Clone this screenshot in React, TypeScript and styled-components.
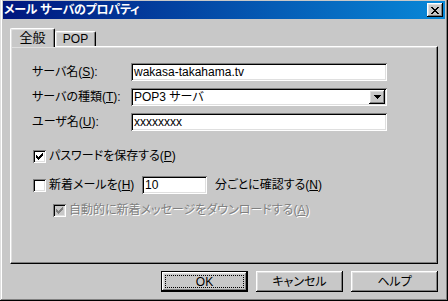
import React from 'react';
import styled, { createGlobalStyle } from 'styled-components';

const FONT = `"Liberation Sans", "Noto Sans CJK JP", sans-serif`;
const FACE = '#c8c8c8';

const GlobalStyle = createGlobalStyle`
  html, body {
    margin: 0;
    padding: 0;
    background: ${FACE};
  }
  body {
    font-family: ${FONT};
    font-size: 12px;
    font-feature-settings: "palt";
    color: #000;
  }
  u {
    text-underline-offset: 1px;
  }
`;

const Window = styled.div`
  width: 448px;
  height: 301px;
  box-sizing: border-box;
  background: ${FACE};
  padding: 1px 3px 3px 3px;
  box-shadow: inset -1px -1px #000, inset 1px 0 #dfdfdf, inset -2px -2px #808080, inset 2px 0 #fff;
  display: flex;
  flex-direction: column;
`;

const TitleBar = styled.div`
  height: 18px;
  display: flex;
  align-items: center;
  justify-content: space-between;
  background: linear-gradient(to right, #00167e, #0888d8);
  padding: 0 2px 0 1px;
`;

const TitleText = styled.span`
  color: #fff;
  font-weight: bold;
  font-size: 12px;
  line-height: 18px;
  letter-spacing: -0.3px;
`;

// raised bevel used by buttons and the close box
const raised = `
  background: ${FACE};
  box-shadow: inset -1px -1px #000, inset 1px 1px #fff, inset -2px -2px #808080, inset 2px 2px #dfdfdf;
`;

const sunken = `
  box-shadow: inset 1px 1px #808080, inset -1px -1px #fff, inset 2px 2px #000, inset -2px -2px #dfdfdf;
`;

const CloseBox = styled.div`
  ${raised}
  width: 16px;
  height: 14px;
  display: flex;
  align-items: center;
  justify-content: center;
`;

const Body = styled.div`
  flex: 1;
  display: flex;
  flex-direction: column;
  padding: 9px 7px 0 7px;
`;

const TabStrip = styled.div`
  height: 18px;
  display: flex;
  align-items: flex-end;
  position: relative;
  z-index: 1;
`;

const Tab = styled.div<{ $active?: boolean }>`
  box-sizing: border-box;
  width: ${({ $active }) => ($active ? '45px' : '41px')};
  height: ${({ $active }) => ($active ? '19px' : '15px')};
  margin-bottom: ${({ $active }) => ($active ? '-1px' : '0')};
  background: ${FACE};
  border-top: 1px solid #fff;
  border-left: 1px solid #fff;
  border-right: 1px solid #000;
  border-top-left-radius: 2px;
  border-top-right-radius: 2px;
  box-shadow: inset -1px 0 #808080, inset 1px 1px #dfdfdf;
  display: flex;
  justify-content: center;
  align-items: ${({ $active }) => ($active ? 'flex-start' : 'center')};
  padding-top: ${({ $active }) => ($active ? '2px' : '0')};
  font-size: ${({ $active }) => ($active ? '13px' : '12px')};
  line-height: 14px;
`;

const Panel = styled.div`
  box-sizing: border-box;
  height: 218px;
  border-top: 1px solid #fff;
  border-left: 1px solid #fff;
  border-right: 1px solid #000;
  border-bottom: 1px solid #000;
  box-shadow: inset -1px -1px #808080, inset 1px 1px #dfdfdf;
  padding: 16px 0 0 21px;
  display: flex;
  flex-direction: column;
`;

const FieldGrid = styled.div`
  display: grid;
  grid-template-columns: 99px 256px;
  grid-auto-rows: 18px;
  row-gap: 7px;
  align-items: center;
`;

const Label = styled.span<{ $disabled?: boolean }>`
  white-space: nowrap;
  line-height: 14px;
  color: ${({ $disabled }) => ($disabled ? '#808080' : '#000')};
  text-shadow: ${({ $disabled }) => ($disabled ? '1px 1px #fff' : 'none')};
`;

const TextBox = styled.div<{ $width?: number }>`
  ${sunken}
  box-sizing: border-box;
  width: ${({ $width }) => ($width ? `${$width}px` : '100%')};
  height: 18px;
  background: #fff;
  padding: 0 3px;
  display: flex;
  align-items: center;
  white-space: nowrap;
  overflow: hidden;
  line-height: 14px;
`;

const SelectBox = styled(TextBox)`
  justify-content: space-between;
  padding: 2px;
  padding-left: 3px;
`;

const DropButton = styled.div`
  ${raised}
  width: 16px;
  height: 14px;
  display: flex;
  align-items: center;
  justify-content: center;
`;

const CheckSection = styled.div`
  display: flex;
  flex-direction: column;
  margin-top: 16px;
`;

const CheckRow = styled.div<{ $indent?: number; $gapTop?: number }>`
  display: flex;
  align-items: center;
  height: 18px;
  padding-left: ${({ $indent }) => $indent ?? 1}px;
  margin-top: ${({ $gapTop }) => $gapTop ?? 0}px;
`;

const CheckBox = styled.div<{ $disabled?: boolean }>`
  ${sunken}
  box-sizing: border-box;
  width: 13px;
  height: 13px;
  flex: none;
  background: ${({ $disabled }) => ($disabled ? FACE : '#fff')};
  display: flex;
  align-items: center;
  justify-content: center;
  margin-right: 3px;
`;

const CheckText = styled(Label)<{ $width?: number }>`
  width: ${({ $width }) => ($width ? `${$width}px` : 'auto')};
`;

const After = styled(Label)`
  margin-left: 8px;
`;

const ButtonRow = styled.div`
  display: flex;
  justify-content: flex-end;
  gap: 8px;
  margin-top: 7px;
`;

const Button = styled.div<{ $default?: boolean }>`
  ${raised}
  box-sizing: border-box;
  width: 87px;
  height: 21px;
  display: flex;
  align-items: center;
  justify-content: center;
  position: relative;
  line-height: 14px;
  ${({ $default }) =>
    $default &&
    `
    border: 1px solid #000;
    box-shadow: inset -1px -1px #000, inset 1px 1px #fff, inset -2px -2px #808080, inset 2px 2px #dfdfdf;
  `}
`;

const FocusRing = styled.span`
  position: absolute;
  inset: 3px;
  border: 1px dotted #000;
`;

const CloseGlyph = () => (
  <svg width="8" height="7" viewBox="0 0 8 7" shapeRendering="crispEdges">
    <path d="M0 0h2v1h1v1h2V1h1V0h2v1H7v1H6v1H5v1h1v1h1v1h1v1H6V6H5V5H3v1H2v1H0V6h1V5h1V4h1V3H2V2H1V1H0z" fill="#000" />
  </svg>
);

const ArrowGlyph = () => (
  <svg width="7" height="4" viewBox="0 0 7 4" shapeRendering="crispEdges">
    <path d="M0 0h7v1H6v1H5v1H4v1H3V3H2V2H1V1H0z" fill="#000" />
  </svg>
);

const CHECK_PIXELS: [number, number][] = [
  [6, 0], [5, 1], [6, 1], [0, 2], [4, 2], [5, 2], [6, 2],
  [0, 3], [1, 3], [3, 3], [4, 3], [5, 3],
  [0, 4], [1, 4], [2, 4], [3, 4], [4, 4],
  [1, 5], [2, 5], [3, 5], [2, 6],
];

const CheckMark = ({ color }: { color: string }) => (
  <svg width="7" height="7" viewBox="0 0 7 7" shapeRendering="crispEdges">
    {CHECK_PIXELS.map(([x, y]) => (
      <rect key={`${x}-${y}`} x={x} y={y} width="1" height="1" fill={color} />
    ))}
  </svg>
);

const App: React.FC = () => {
  return (
    <>
      <GlobalStyle />
      <Window>
        <TitleBar>
          <TitleText>メール サーバのプロパティ</TitleText>
          <CloseBox>
            <CloseGlyph />
          </CloseBox>
        </TitleBar>
        <Body>
          <TabStrip>
            <Tab $active>全般</Tab>
            <Tab>POP</Tab>
          </TabStrip>
          <Panel>
            <FieldGrid>
              <Label>
                サーバ名(<u>S</u>):
              </Label>
              <TextBox>wakasa-takahama.tv</TextBox>
              <Label>
                サーバの種類(<u>T</u>):
              </Label>
              <SelectBox>
                <span>POP3 サーバ</span>
                <DropButton>
                  <ArrowGlyph />
                </DropButton>
              </SelectBox>
              <Label>
                ユーザ名(<u>U</u>):
              </Label>
              <TextBox>xxxxxxxx</TextBox>
            </FieldGrid>
            <CheckSection>
              <CheckRow>
                <CheckBox>
                  <CheckMark color="#000" />
                </CheckBox>
                <CheckText>
                  パスワードを保存する(<u>P</u>)
                </CheckText>
              </CheckRow>
              <CheckRow $gapTop={11}>
                <CheckBox />
                <CheckText $width={93}>
                  新着メールを(<u>H</u>)
                </CheckText>
                <TextBox $width={65}>10</TextBox>
                <After>
                  分ごとに確認する(<u>N</u>)
                </After>
              </CheckRow>
              <CheckRow $indent={21} $gapTop={7}>
                <CheckBox $disabled>
                  <CheckMark color="#808080" />
                </CheckBox>
                <CheckText $disabled>
                  自動的に新着メッセージをダウンロードする(<u>A</u>)
                </CheckText>
              </CheckRow>
            </CheckSection>
          </Panel>
          <ButtonRow>
            <Button $default>
              OK
              <FocusRing />
            </Button>
            <Button>キャンセル</Button>
            <Button>ヘルプ</Button>
          </ButtonRow>
        </Body>
      </Window>
    </>
  );
};

export default App;
